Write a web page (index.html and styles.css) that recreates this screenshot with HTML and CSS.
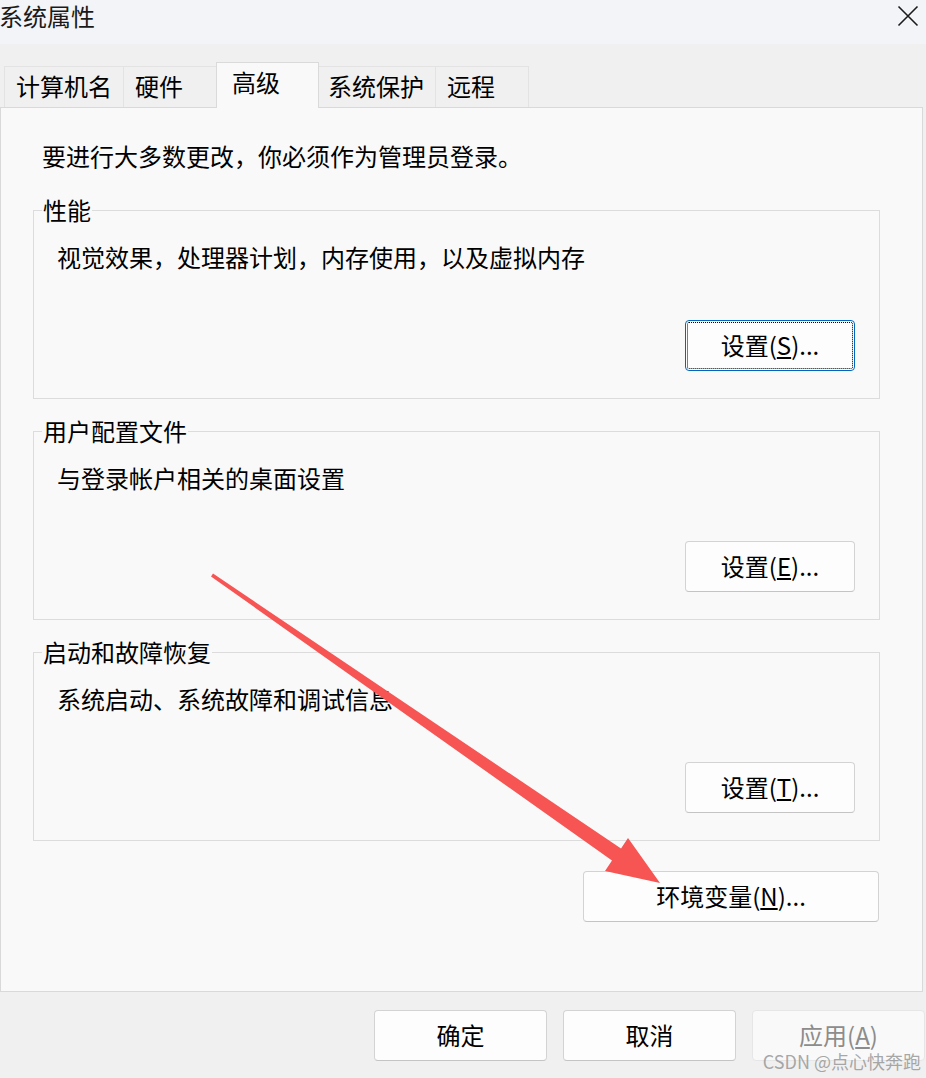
FILE: index.html
```html
<!DOCTYPE html>
<html lang="zh-CN">
<head>
<meta charset="utf-8">
<title>系统属性</title>
<link rel="stylesheet" href="styles.css">
</head>
<body>
<div class="window">
  <div class="titlebar">
    <span class="title">系统属性</span>
    <svg class="close" width="22" height="22" viewBox="0 0 22 22"><path d="M1.5 1.5 L20.5 20.5 M20.5 1.5 L1.5 20.5" stroke="#1b1b1b" stroke-width="1.6" fill="none"/></svg>
  </div>
  <div class="tabs">
    <div class="tab">计算机名</div>
    <div class="tab">硬件</div>
    <div class="tab selected">高级</div>
    <div class="tab">系统保护</div>
    <div class="tab last">远程</div>
  </div>
  <div class="panel">
    <p class="intro">要进行大多数更改，你必须作为管理员登录。</p>
    <fieldset class="group">
      <legend>性能</legend>
      <p class="desc">视觉效果，处理器计划，内存使用，以及虚拟内存</p>
      <button class="btn set focused">设置(<u>S</u>)...</button>
    </fieldset>
    <fieldset class="group">
      <legend>用户配置文件</legend>
      <p class="desc">与登录帐户相关的桌面设置</p>
      <button class="btn set">设置(<u>E</u>)...</button>
    </fieldset>
    <fieldset class="group">
      <legend>启动和故障恢复</legend>
      <p class="desc">系统启动、系统故障和调试信息</p>
      <button class="btn set">设置(<u>T</u>)...</button>
    </fieldset>
    <button class="btn env">环境变量(<u>N</u>)...</button>
  </div>
  <div class="footer">
    <button class="btn foot">确定</button>
    <button class="btn foot">取消</button>
    <button class="btn foot disabled">应用(<u>A</u>)</button>
  </div>
  <div class="watermark">CSDN @点心快奔跑</div>
  <svg class="arrow" width="926" height="1078" viewBox="0 0 926 1078">
    <polygon points="211,576.5 213,573.5 621,848.5 628,838 660,883 605,871 612,860.5" fill="#f75454"/>
  </svg>
</div>
</body>
</html>
```

FILE: styles.css
```css
html, body {
  margin: 0;
  padding: 0;
}
body {
  width: 926px;
  height: 1078px;
  overflow: hidden;
  background: #f0f0f0;
  font-family: "Noto Sans CJK SC", "Noto Sans", sans-serif;
  color: #000;
}
.window {
  position: relative;
  width: 926px;
  height: 1078px;
  display: flex;
  flex-direction: column;
}
.titlebar {
  height: 44px;
  background: #f3f4f8;
  display: flex;
  justify-content: space-between;
  align-items: flex-start;
  padding-right: 7px;
}
.title {
  font-size: 24px;
  line-height: 32px;
  color: #1a1a1a;
  margin-left: -1px;
}
.close {
  margin-top: 5px;
}
.tabs {
  display: flex;
  align-items: flex-end;
  height: 45px;
  margin-top: 18px;
  padding-left: 4px;
  position: relative;
  z-index: 2;
}
.tab {
  box-sizing: border-box;
  height: 41px;
  min-width: 94px;
  padding: 0 11px;
  font-size: 24px;
  line-height: 38px;
  background: #f0f0f0;
  border-top: 1px solid #e3e3e3;
  border-left: 1px solid #e3e3e3;
  white-space: nowrap;
}
.tab.last {
  border-right: 1px solid #e3e3e3;
}
.tab.selected {
  position: relative;
  z-index: 3;
  height: 46px;
  min-width: 103px;
  margin: 0 0 -1px -1px;
  padding: 0 15px;
  line-height: 38px;
  background: #f9f9f9;
  border: 1px solid #dadada;
  border-bottom: none;
}
.tab.selected + .tab {
  border-left: none;
  padding-left: 9px;
}
.panel {
  position: relative;
  z-index: 1;
  box-sizing: border-box;
  width: 923px;
  height: 885px;
  background: #f9f9f9;
  border: 1px solid #d9d9d9;
  display: flex;
  flex-direction: column;
  align-items: flex-start;
}
.intro {
  margin: 34px 0 0 41px;
  font-size: 24px;
  line-height: 28px;
}
.group {
  box-sizing: border-box;
  width: 847px;
  margin: 18px 0 0 32px;
  padding: 0 24px 27px 23px;
  border: 1px solid #dcdcdc;
  display: flex;
  flex-direction: column;
  align-items: flex-start;
  min-inline-size: 0;
}
.intro + .group {
  margin-top: 26px;
}
.group legend {
  padding: 0 1px;
  margin-left: -15px;
  font-size: 24px;
  line-height: 28px;
}
.desc {
  margin: 19px 0 0 0;
  font-size: 24px;
  line-height: 28px;
}
.btn {
  box-sizing: border-box;
  height: 51px;
  background: #fdfdfd;
  border: 1px solid #d3d3d3;
  border-bottom-color: #c4c4c4;
  border-radius: 4px;
  font-family: inherit;
  font-size: 24px;
  line-height: 28px;
  color: #000;
  padding: 0 0 2px 0;
  text-align: center;
}
.btn u {
  text-underline-offset: 2px;
}
.set {
  width: 170px;
  margin-top: 49px;
  align-self: flex-end;
}
.focused {
  border: 1px solid #0067c0;
  outline: 1px dotted #000;
  outline-offset: -3px;
}
.env {
  width: 296px;
  margin-top: 30px;
  margin-left: 582px;
}
.footer {
  display: flex;
  justify-content: flex-end;
  gap: 16px;
  padding: 18px 1px 0 0;
}
.foot {
  width: 173px;
}
.disabled {
  color: #8c8c8c;
  background: #f9f9f9;
  border-color: #e6e6e6;
}
.watermark {
  position: absolute;
  right: 5px;
  top: 1048px;
  font-size: 18px;
  line-height: 26px;
  color: rgba(140, 140, 140, 0.75);
  font-family: "Noto Sans CJK SC", "Liberation Sans", sans-serif;
}
.arrow {
  position: absolute;
  left: 0;
  top: 0;
  pointer-events: none;
  z-index: 5;
}
```
